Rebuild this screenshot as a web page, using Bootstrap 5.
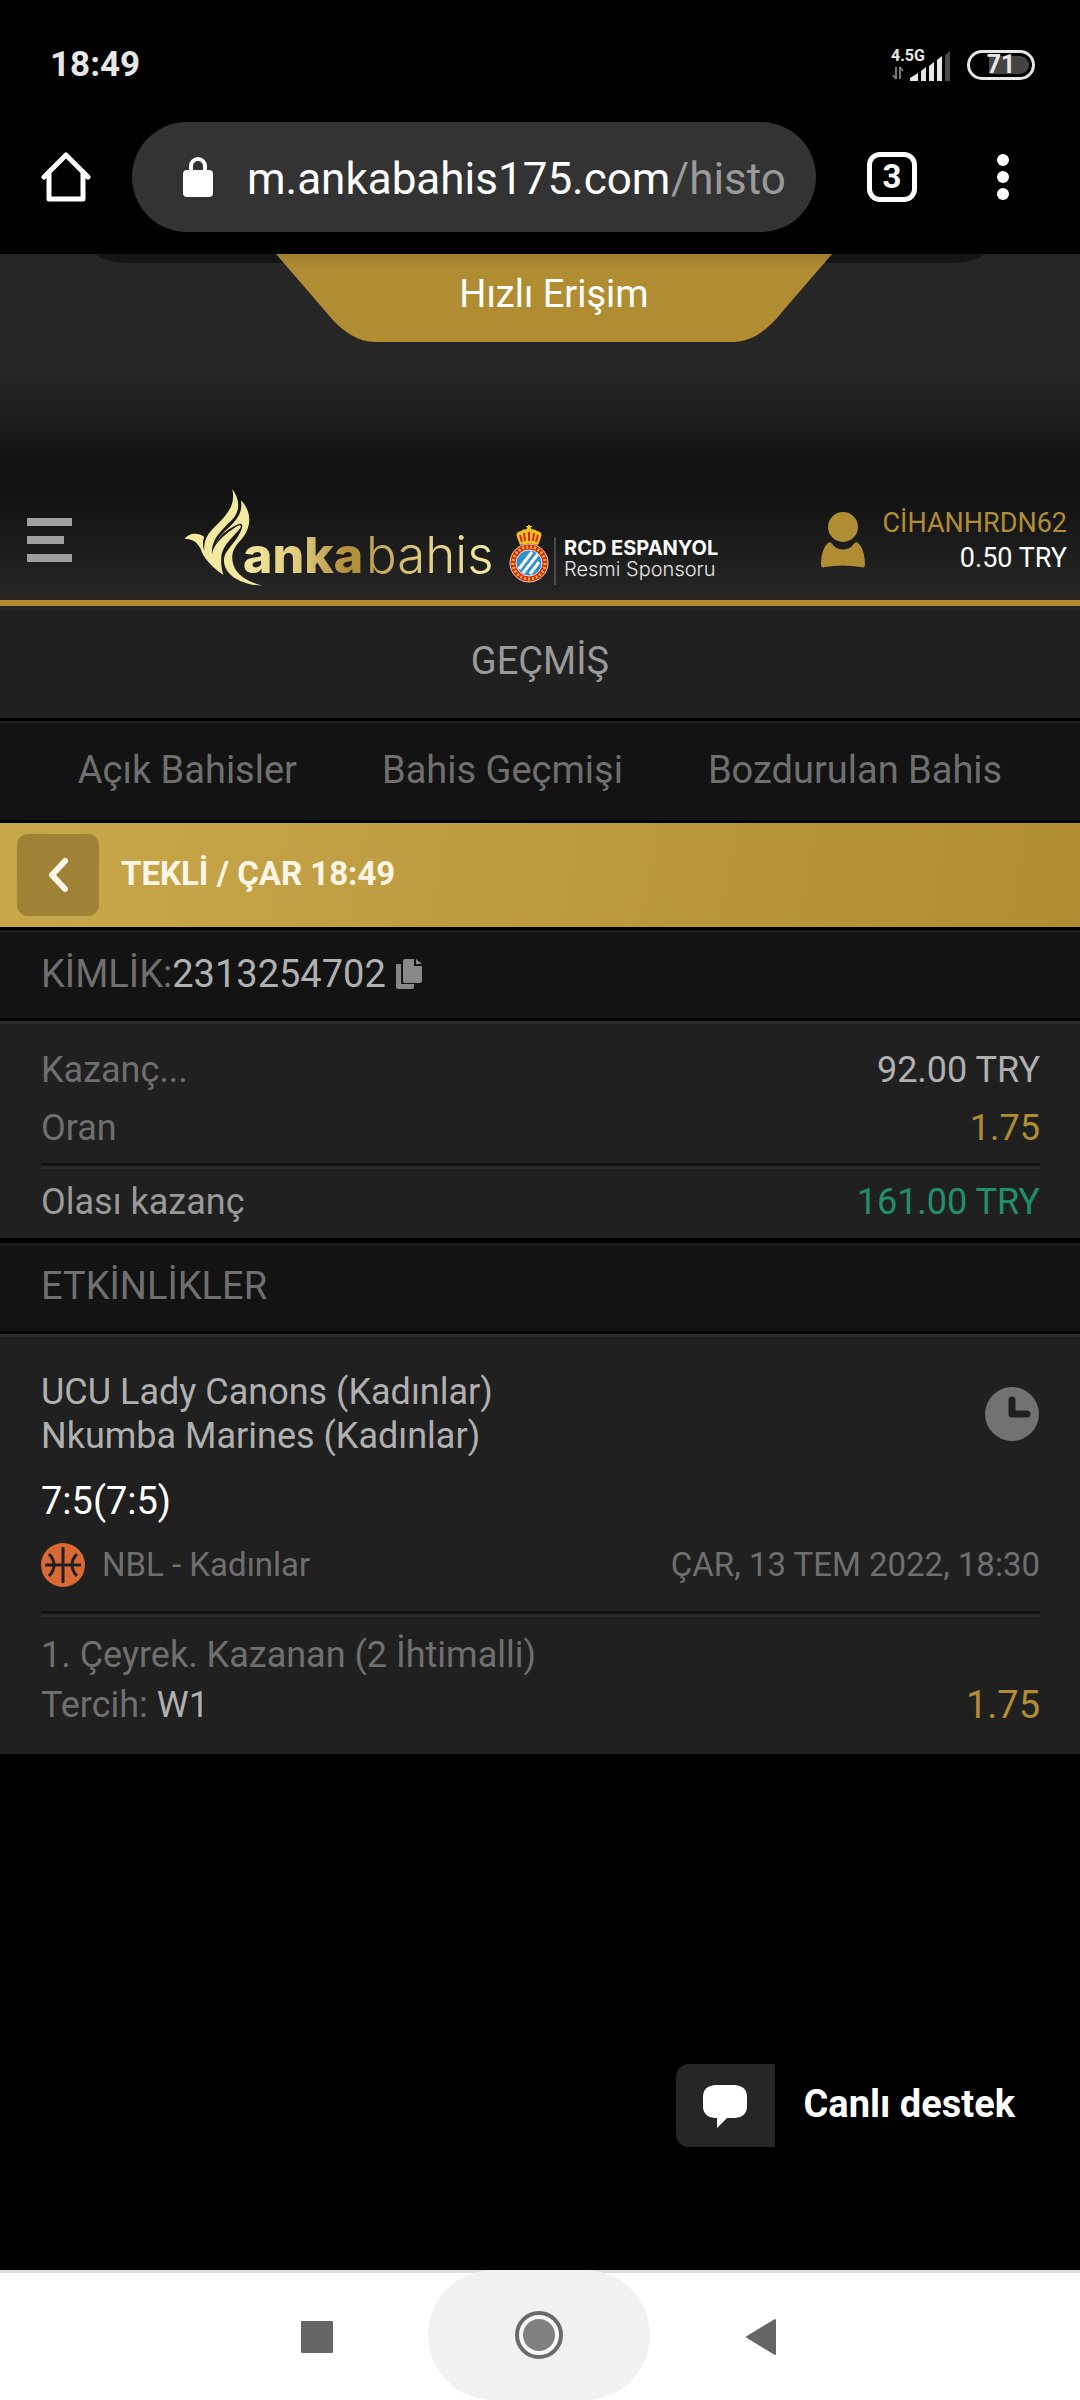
<!DOCTYPE html>
<html lang="tr">
<head>
<meta charset="utf-8">
<meta name="viewport" content="width=device-width, initial-scale=1">
<title>Geçmiş</title>
<link href="https://cdn.jsdelivr.net/npm/bootstrap@5.3.0/dist/css/bootstrap.min.css" rel="stylesheet">
<style>
  :root { --gold: #b08d33; --panel: #202020; --panel-dark: #131313; --muted: #6f6f6f; --soft: #b0b0b0; }
  body { background: #000; color: var(--soft); font-family: Roboto, "Noto Sans", sans-serif; font-size: 36px; line-height: 44px; }
  svg { display: block; flex: none; }
  button, a { color: inherit; text-decoration: none; }
  .plain { background: none; border: 0; padding: 0; }
  .fs-xl { font-size: 38px; }
  .t-muted { color: var(--muted); }
  .t-soft { color: var(--soft); }
  .t-gold { color: var(--gold); }
  .t-green { color: #20906b; }
  .t-grey { color: #9a9a9a; }

  .status-bar { padding: 45px 45px 37px 50px; line-height: 40px; font-size: 35px; color: #e6e6e6; }
  .net-label { font-size: 16px; line-height: 14px; }
  .signal { margin-left: -15px; }
  .battery { width: 68px; height: 30px; border: 3px solid #e6e6e6; border-radius: 15px; font-size: 25px; line-height: 24px; }
  .battery-fill { top: 3px; bottom: 3px; right: 3px; width: 40px; border-radius: 2px 9px 9px 2px; background: #444; }

  .browser-bar { padding: 0 71px 22px 41px; }
  .address { height: 110px; border-radius: 55px; background: #333; margin-left: 41px; margin-right: 51px; padding-left: 51px; gap: 34px; font-size: 44px; line-height: 60px; color: #fff; }
  .address-text { padding-top: 3px; }
  .address input { width: 424px; padding: 0; border: 0; outline: 0; background: none; color: inherit; }
  .address-path { color: #9a9a9a; }
  .tab-count { width: 50px; height: 50px; border: 5px solid #fff; border-radius: 13px; font-size: 33px; line-height: 40px; color: #fff; margin-right: 80px; }

  .site-top { background: linear-gradient(#262626 0, #272727 110px, #1e1e1e 165px, #111 212px, #121212 240px, #262626 100%); border-bottom: 6px solid var(--gold); }
  .quick { height: 226px; }
  .quick-shade { top: 0; left: 9%; right: 9%; height: 9px; background: #151515; border-radius: 0 0 34px 34px / 0 0 9px 9px; }
  .quick-tab { width: 556px; height: 88px; margin-left: 28px; padding-bottom: 8px; color: #fff; background: linear-gradient(#9f7e2e, var(--gold) 14px); clip-path: path("M0 0 L50 58 C66 78 82 88 100 88 H457 C474 88 490 78 506 58 L556 0Z"); }
  .site-head { height: 120px; padding: 0 13px 0 27px; }
  .site-logo { margin-left: 108px; }
  .user-box { gap: 17px; font-size: 27px; line-height: 35px; }
  .user-text { padding-top: 2px; }

  .band { border-top: 3px solid #1d1d1d; border-bottom: 3px solid #000; background: var(--panel-dark); padding-bottom: 4px; }
  .band-title { height: 115px; background: var(--panel); border-top-color: #272727; }
  .band-tabs { height: 102px; gap: 85px; }
  .band-head { height: 91px; padding-left: 41px; }
  .coupon-bar { height: 107px; border-bottom: 3px solid #000; padding-left: 17px; gap: 22px; background: linear-gradient(100deg, #c9a74b, var(--gold)); color: #fdf6e6; font-size: 33px; }
  .back-btn { width: 82px; height: 82px; border-radius: 11px; background: #a08237; }
  .coupon-title { padding-bottom: 2px; }
  .sheet { background: var(--panel); border-top: 3px solid #2b2b2b; padding: 0 40px 0 41px; }
  .summary { padding-top: 17px; padding-bottom: 7px; border-bottom: 5px solid #000; line-height: 58px; }
  .rule { height: 6px; border-top: 3px solid #131313; border-bottom: 3px solid #2b2b2b; }
  .rule-sum { margin: 6px 0 4px; }
  .event { padding-top: 33px; padding-bottom: 24px; }
  .score { line-height: 52px; margin: 17px 0 15px; }
  .league { height: 46px; gap: 16px; margin-bottom: 23px; font-size: 33px; }
  .pick { line-height: 50px; margin-top: 13px; }

  .support { margin: auto 65px 123px auto; gap: 29px; color: #fff; }
  .support-icon { width: 99px; height: 83px; border-radius: 13px 0 0 13px; background: #262626; }
  .support-label { padding-bottom: 4px; }
  .phone-nav { height: 130px; background: #fff; border-top: 3px solid #ddd; padding-right: 2px; }
  .phone-nav button { width: 222px; }
  .phone-nav .home-key { background: #f1f1f1; border-radius: 66px; margin-top: -3px; }
</style>
</head>
<body>
<div class="d-flex flex-column min-vh-100">

  <div class="status-bar d-flex justify-content-between align-items-center fw-bold">
    <span>18:49</span>
    <div class="d-flex align-items-center">
      <div class="d-flex align-items-end me-3">
        <div class="d-flex flex-column">
          <span class="net-label">4.5G</span>
          <svg width="34" height="18" viewBox="0 0 34 18"><path d="M5 4v12M5 16l-3-4M9 4v12M9 4l3 4" stroke="#777" stroke-width="2" fill="none"/></svg>
        </div>
        <svg class="signal" width="41" height="30" viewBox="0 0 41 30"><path d="M0 30v-3l8-5v8zM11 30V20l5-4v14zM19 30V15l5-4v19zM27 30V9l5-4v25z" fill="#e6e6e6"/><path d="M35 30V4l5-4v30z" fill="#4a4a4a"/></svg>
      </div>
      <div class="battery position-relative text-center"><span class="battery-fill position-absolute"></span><span class="position-relative">71</span></div>
    </div>
  </div>

  <div class="browser-bar d-flex align-items-center">
    <button class="plain" aria-label="Ana sayfa"><svg width="50" height="52" viewBox="0 0 50 52"><path d="M3 26 25 4l22 22M8 22v26h34V22" fill="none" stroke="#fff" stroke-width="5" stroke-linejoin="round" stroke-linecap="round"/></svg></button>
    <label class="address d-flex align-items-center flex-grow-1">
      <svg width="30" height="40" viewBox="0 0 30 40"><rect y="13" width="30" height="27" rx="4" fill="#fff"/><path d="M8 14V9a7 7 0 0 1 14 0v5" fill="none" stroke="#fff" stroke-width="4"/></svg>
      <span class="address-text d-flex"><input type="text" value="m.ankabahis175.com" aria-label="Adres"><span class="address-path">/histo</span></span>
    </label>
    <button class="plain tab-count fw-bold" aria-label="Sekmeler">3</button>
    <button class="plain" aria-label="Menü"><svg width="12" height="46" viewBox="0 0 12 46" fill="#fff"><circle cx="6" cy="6" r="6"/><circle cx="6" cy="23" r="6"/><circle cx="6" cy="40" r="6"/></svg></button>
  </div>

  <header class="site-top">
    <div class="quick position-relative d-flex justify-content-center">
      <div class="quick-shade position-absolute"></div>
      <button class="quick-tab plain fs-xl position-relative">Hızlı Erişim</button>
    </div>
    <div class="site-head d-flex align-items-center">
      <button class="plain" aria-label="Menü"><svg width="45" height="44" viewBox="0 0 45 44" fill="#9f9f9f"><path d="M0 0h45v8H0zM0 18h37v8H0zM0 36h45v8H0z"/></svg></button>
      <a href="#" class="site-logo">
        <svg width="550" height="108" viewBox="0 3 550 108" font-family="Inter, sans-serif">
          <defs>
            <linearGradient id="boldGold"><stop offset="0" stop-color="#f4e9a0"/><stop offset=".5" stop-color="#dcc87a"/><stop offset=".85" stop-color="#b3903c"/><stop offset="1" stop-color="#b3903c"/></linearGradient>
            <linearGradient id="thinGold"><stop offset="0" stop-color="#bd9e4c"/><stop offset=".5" stop-color="#e0cf85"/><stop offset="1" stop-color="#f4e9a0"/></linearGradient>
          </defs>
          <g transform="scale(.3333) translate(-60 -42)" fill="#f4e9a0">
            <path d="M74 210C84 194 112 188 133 204C127 216 128 232 133 246C130 205 150 188 178 160C208 128 226 104 217 60C238 88 242 122 220 148C196 176 152 205 156 256C162 225 185 207 205 190C225 175 240 162 243 172C238 190 190 220 184 262C182 285 186 305 190 318C150 290 130 265 122 240C112 218 95 208 74 210Z"/>
            <path d="M243 94C278 130 275 180 240 216C215 242 212 265 222 292C235 325 270 340 308 350C240 348 190 315 192 272C194 240 236 218 247 172C246 160 236 164 222 172C202 182 178 200 166 228C174 202 200 182 218 164C240 140 247 122 243 94Z"/>
          </g>
          <text x="63" y="90" font-size="50" font-weight="800" fill="url(#boldGold)">anka</text>
          <text x="186" y="90" font-size="51" font-weight="300" fill="url(#thinGold)">bahis</text>
          <path d="M340 62l-3-8q-2-5 4-6 2-2 6-2v-2h-1v-1h2v-1h2v1h2v1h-1v2q4 0 6 2 6 1 4 6l-3 8q-9-3-18 0z" fill="#f2c21a"/>
          <path d="M342 59l-2-7M345 58l-1-8M349 58v-9M353 58l1-8M356 59l2-7" stroke="#d8261c" stroke-width="2"/>
          <circle cx="349" cy="80" r="19" fill="#d8261c" stroke="#f0d9c0"/>
          <circle cx="349" cy="80" r="16" fill="none" stroke="#f2c21a" stroke-width="3" stroke-dasharray="2 2"/>
          <circle cx="349" cy="80" r="13" fill="#2f8fcf" stroke="#e8e8e8"/>
          <path d="M339 86l13-17M343 90l15-19M350 91l9-12" stroke="#fff" stroke-width="3"/>
          <path d="M375 54v48" stroke="#777"/>
          <text x="384" y="72" font-size="20" font-weight="700" fill="#fff">RCD ESPANYOL</text>
          <text x="384" y="93" font-size="20" font-weight="300" fill="#e6e6e6">Resmi Sponsoru</text>
        </svg>
      </a>
      <div class="user-box d-flex align-items-center ms-auto">
        <svg width="44" height="56" viewBox="0 0 44 56" fill="#b08d33"><circle cx="22" cy="15" r="15"/><path d="M0 52c0-9 3-18 7-21 2-2 4 0 5 2 5 6 15 6 20 0 1-2 3-4 5-2 4 3 7 12 7 21 0 3-1 4-4 3-12-2-24-2-36 0-3 1-4 0-4-3z"/></svg>
        <div class="user-text d-flex flex-column text-end"><span class="t-gold">CİHANHRDN62</span><span class="text-white">0.50 TRY</span></div>
      </div>
    </div>
  </header>

  <main class="d-flex flex-column flex-grow-1">
    <h1 class="band band-title fs-xl fw-normal t-grey m-0 d-flex align-items-center justify-content-center">GEÇMİŞ</h1>
    <nav class="band band-tabs fs-xl t-muted d-flex align-items-center justify-content-center text-nowrap">
      <a href="#">Açık Bahisler</a><a href="#">Bahis Geçmişi</a><a href="#">Bozdurulan Bahis</a>
    </nav>
    <div class="coupon-bar d-flex align-items-center fw-bold">
      <button class="plain back-btn d-flex align-items-center justify-content-center" aria-label="Geri"><svg width="22" height="36" viewBox="0 0 22 36"><path d="M18 4 5 18l13 14" fill="none" stroke="currentColor" stroke-width="6" stroke-linecap="round" stroke-linejoin="round"/></svg></button>
      <span class="coupon-title">TEKLİ / ÇAR 18:49</span>
    </div>
    <div class="band band-head fs-xl d-flex align-items-center">
      <span class="t-muted">KİMLİK:</span><span>2313254702</span>
      <button class="plain ms-2" aria-label="Kopyala"><svg width="30" height="32" viewBox="0 0 30 32" fill="#888"><path d="M3 6h4v20h13v3q0 2-2 2H5q-3 0-3-2V8q0-2 1-2z"/><path d="M11 1h9v7h8v15q0 2-2 2H11q-2 0-2-2V3q0-2 2-2zM22 1l6 5h-6z"/></svg></button>
    </div>

    <section class="sheet summary">
      <div class="d-flex justify-content-between"><span class="t-muted">Kazanç...</span><span>92.00 TRY</span></div>
      <div class="d-flex justify-content-between"><span class="t-muted">Oran</span><span class="t-gold">1.75</span></div>
      <div class="rule rule-sum"></div>
      <div class="d-flex justify-content-between"><span class="t-grey">Olası kazanç</span><span class="t-green">161.00 TRY</span></div>
    </section>

    <h2 class="band band-head fs-xl fw-normal t-muted m-0 d-flex align-items-center">ETKİNLİKLER</h2>

    <section class="sheet event">
      <div class="d-flex justify-content-between align-items-center">
        <div>UCU Lady Canons (Kadınlar)<br>Nkumba Marines (Kadınlar)</div>
        <svg width="55" height="55" viewBox="0 0 55 55"><circle cx="27" cy="27" r="27" fill="#727272"/><path d="M27 13v14h15" fill="none" stroke="#202020" stroke-width="7" stroke-linecap="round" stroke-linejoin="round"/></svg>
      </div>
      <div class="score fs-xl text-white">7:5(7:5)</div>
      <div class="league d-flex align-items-center t-muted">
        <svg width="45" height="45" viewBox="0 0 45 45"><circle cx="22" cy="22" r="22" fill="#d96a35"/><path d="M22 4v36M4 22h36M8 11q5 5 5 11t-5 11M36 11q-5 5-5 11t5 11" fill="none" stroke="#202020" stroke-width="3"/></svg>
        <span>NBL - Kadınlar</span><span class="ms-auto">ÇAR, 13 TEM 2022, 18:30</span>
      </div>
      <div class="rule"></div>
      <div class="pick t-muted">
        <div>1. Çeyrek. Kazanan (2 İhtimalli)</div>
        <div class="d-flex justify-content-between"><span>Tercih: <span class="t-soft">W1</span></span><span class="fs-xl t-gold">1.75</span></div>
      </div>
    </section>

    <button class="plain support d-flex align-items-center fs-xl fw-bold">
      <span class="support-icon d-flex align-items-center justify-content-center"><svg width="44" height="44" viewBox="0 0 44 44" fill="#fff"><path d="M12 1h20q12 1 12 12v9q0 11-12 12h-8L14 44V34h-2Q0 33 0 22v-9Q0 2 12 1z"/></svg></span>
      <span class="support-label">Canlı destek</span>
    </button>
  </main>

  <nav class="phone-nav d-flex justify-content-center">
    <button class="plain d-flex align-items-center justify-content-center" aria-label="Son uygulamalar"><svg width="32" height="32" viewBox="0 0 32 32"><rect width="32" height="32" rx="1" fill="#666"/></svg></button>
    <button class="plain home-key d-flex align-items-center justify-content-center" aria-label="Ana ekran"><svg width="48" height="48" viewBox="0 0 48 48"><circle cx="24" cy="24" r="22" fill="#f8f8f8" stroke="#6a6a6a" stroke-width="4"/><circle cx="24" cy="24" r="16" fill="#808080"/></svg></button>
    <button class="plain d-flex align-items-center justify-content-center" aria-label="Geri"><svg width="32" height="38" viewBox="0 0 32 38"><path d="M2 19 30 2v34z" fill="#666" stroke="#666" stroke-width="2" stroke-linejoin="round"/></svg></button>
  </nav>
</div>
<script src="https://cdn.jsdelivr.net/npm/bootstrap@5.3.0/dist/js/bootstrap.bundle.min.js"></script>
</body>
</html>
